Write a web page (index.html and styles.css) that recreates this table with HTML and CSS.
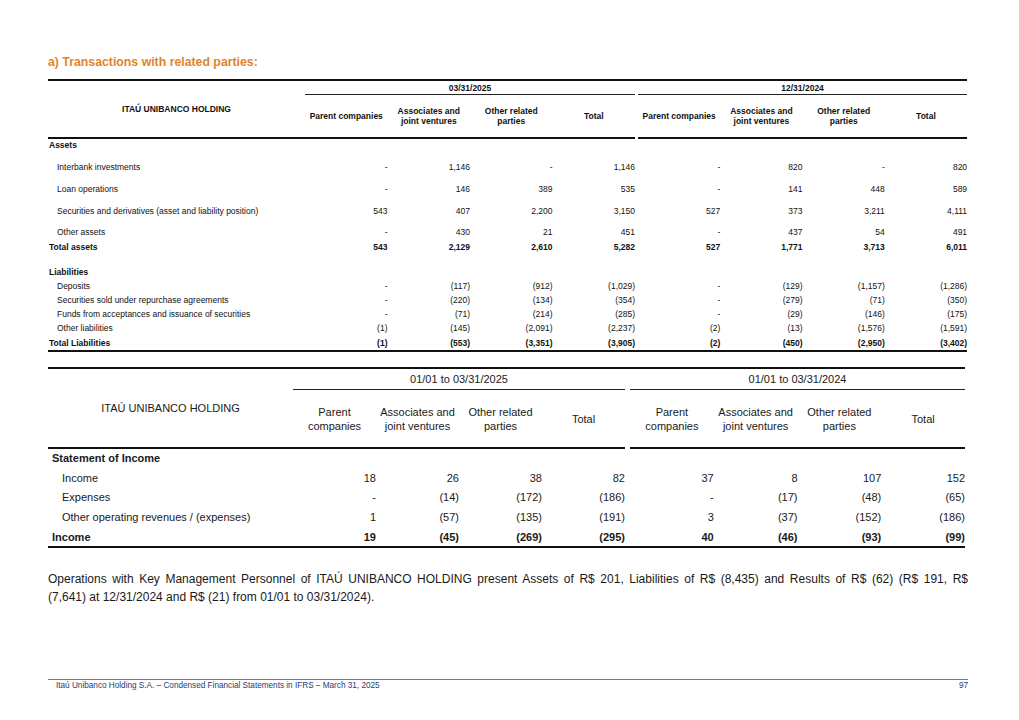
FILE: index.html
```html
<!DOCTYPE html>
<html lang="en">
<head>
<meta charset="utf-8">
<title>Transactions with related parties</title>
<link rel="stylesheet" href="styles.css">
</head>
<body>
<div class="page">
  <h2 class="title">a) Transactions with related parties:</h2>

  <table class="t1">
    <colgroup>
      <col class="c-label">
      <col class="c-g1"><col class="c-g1"><col class="c-g1"><col class="c-g1">
      <col class="c-gap">
      <col class="c-g2"><col class="c-g2"><col class="c-g2"><col class="c-g2">
    </colgroup>
    <thead>
      <tr class="h-date">
        <th rowspan="2" class="lbl-head">ITAÚ UNIBANCO HOLDING</th>
        <th colspan="4" class="date">03/31/2025</th>
        <th rowspan="2" class="gap-head"></th>
        <th colspan="4" class="date">12/31/2024</th>
      </tr>
      <tr class="h-cols">
        <th>Parent companies</th>
        <th>Associates and<br>joint ventures</th>
        <th>Other related<br>parties</th>
        <th>Total</th>
        <th>Parent companies</th>
        <th>Associates and<br>joint ventures</th>
        <th>Other related<br>parties</th>
        <th>Total</th>
      </tr>
    </thead>
    <tbody>
      <tr class="h11 sec"><td>Assets</td><td></td><td></td><td></td><td></td><td></td><td></td><td></td><td></td><td></td></tr>
      <tr class="h22"><td class="ind">Interbank investments</td><td>-</td><td>1,146</td><td>-</td><td>1,146</td><td></td><td>-</td><td>820</td><td>-</td><td>820</td></tr>
      <tr class="h22"><td class="ind">Loan operations</td><td>-</td><td>146</td><td>389</td><td>535</td><td></td><td>-</td><td>141</td><td>448</td><td>589</td></tr>
      <tr class="h22"><td class="ind">Securities and derivatives (asset and liability position)</td><td>543</td><td>407</td><td>2,200</td><td>3,150</td><td></td><td>527</td><td>373</td><td>3,211</td><td>4,111</td></tr>
      <tr class="h21"><td class="ind">Other assets</td><td>-</td><td>430</td><td>21</td><td>451</td><td></td><td>-</td><td>437</td><td>54</td><td>491</td></tr>
      <tr class="h15 sec"><td>Total assets</td><td>543</td><td>2,129</td><td>2,610</td><td>5,282</td><td></td><td>527</td><td>1,771</td><td>3,713</td><td>6,011</td></tr>
      <tr class="h25 sec"><td>Liabilities</td><td></td><td></td><td></td><td></td><td></td><td></td><td></td><td></td><td></td></tr>
      <tr class="h14"><td class="ind">Deposits</td><td>-</td><td>(117)</td><td>(912)</td><td>(1,029)</td><td></td><td>-</td><td>(129)</td><td>(1,157)</td><td>(1,286)</td></tr>
      <tr class="h14"><td class="ind">Securities sold under repurchase agreements</td><td>-</td><td>(220)</td><td>(134)</td><td>(354)</td><td></td><td>-</td><td>(279)</td><td>(71)</td><td>(350)</td></tr>
      <tr class="h14"><td class="ind">Funds from acceptances and issuance of securities</td><td>-</td><td>(71)</td><td>(214)</td><td>(285)</td><td></td><td>-</td><td>(29)</td><td>(146)</td><td>(175)</td></tr>
      <tr class="h14"><td class="ind">Other liabilities</td><td>(1)</td><td>(145)</td><td>(2,091)</td><td>(2,237)</td><td></td><td>(2)</td><td>(13)</td><td>(1,576)</td><td>(1,591)</td></tr>
      <tr class="last sec"><td>Total Liabilities</td><td>(1)</td><td>(553)</td><td>(3,351)</td><td>(3,905)</td><td></td><td>(2)</td><td>(450)</td><td>(2,950)</td><td>(3,402)</td></tr>
    </tbody>
  </table>

  <table class="t2">
    <colgroup>
      <col class="c-label">
      <col class="c-g1"><col class="c-g1"><col class="c-g1"><col class="c-g1">
      <col class="c-gap">
      <col class="c-g2"><col class="c-g2"><col class="c-g2"><col class="c-g2">
    </colgroup>
    <thead>
      <tr class="h-date">
        <th rowspan="2" class="lbl-head">ITAÚ UNIBANCO HOLDING</th>
        <th colspan="4" class="date">01/01 to 03/31/2025</th>
        <th rowspan="2" class="gap-head"></th>
        <th colspan="4" class="date">01/01 to 03/31/2024</th>
      </tr>
      <tr class="h-cols">
        <th>Parent<br>companies</th>
        <th>Associates and<br>joint ventures</th>
        <th>Other related<br>parties</th>
        <th>Total</th>
        <th>Parent<br>companies</th>
        <th>Associates and<br>joint ventures</th>
        <th>Other related<br>parties</th>
        <th>Total</th>
      </tr>
    </thead>
    <tbody>
      <tr class="h16 sec"><td>Statement of Income</td><td></td><td></td><td></td><td></td><td></td><td></td><td></td><td></td><td></td></tr>
      <tr class="h20"><td class="ind">Income</td><td>18</td><td>26</td><td>38</td><td>82</td><td></td><td>37</td><td>8</td><td>107</td><td>152</td></tr>
      <tr class="h19"><td class="ind">Expenses</td><td>-</td><td>(14)</td><td>(172)</td><td>(186)</td><td></td><td>-</td><td>(17)</td><td>(48)</td><td>(65)</td></tr>
      <tr class="h20"><td class="ind">Other operating revenues / (expenses)</td><td>1</td><td>(57)</td><td>(135)</td><td>(191)</td><td></td><td>3</td><td>(37)</td><td>(152)</td><td>(186)</td></tr>
      <tr class="last sec"><td>Income</td><td>19</td><td>(45)</td><td>(269)</td><td>(295)</td><td></td><td>40</td><td>(46)</td><td>(93)</td><td>(99)</td></tr>
    </tbody>
  </table>

  <p class="note"><span class="note-line1">Operations with Key Management Personnel of ITAÚ UNIBANCO HOLDING present Assets of R$ 201, Liabilities of R$ (8,435) and Results of R$ (62) (R$ 191, R$</span><span class="note-line2">(7,641) at 12/31/2024 and R$ (21) from 01/01 to 03/31/2024).</span></p>

  <footer class="footer">
    <span>Itaú Unibanco Holding S.A. – Condensed Financial Statements in IFRS – March 31, 2025</span>
    <span>97</span>
  </footer>
</div>
</body>
</html>
```

FILE: styles.css
```css
html, body {
  margin: 0;
  padding: 0;
  background: #ffffff;
}

body {
  font-family: "Liberation Sans", Arial, sans-serif;
  color: #111111;
}

.page {
  box-sizing: border-box;
  width: 1019px;
  height: 720px;
  padding: 55px 51px 30px 48px;
  display: flex;
  flex-direction: column;
  overflow: hidden;
}

.title {
  margin: 0 0 9px 0;
  font-size: 12.3px;
  line-height: 15px;
  font-weight: bold;
  color: #e3832b;
}

table {
  border-collapse: separate;
  border-spacing: 0;
  table-layout: fixed;
}

th, td {
  padding: 0;
  white-space: nowrap;
}

/* ---------- Table 1 ---------- */
.t1 {
  width: 919px;
  font-size: 8.5px;
  line-height: 10px;
}

.t1 .c-label { width: 257px; }
.t1 .c-g1 { width: 82.5px; }
.t1 .c-gap { width: 3px; }
.t1 .c-g2 { width: 82.25px; }

.t1 th {
  font-weight: bold;
  text-align: center;
  vertical-align: middle;
}

.t1 .h-date { height: 16px; }
.t1 .h-cols { height: 44px; }

.t1 .lbl-head,
.t1 .gap-head,
.t1 .date {
  border-top: 2px solid #111;
}

.t1 .lbl-head { border-bottom: 2px solid #111; }
.t1 .date { border-bottom: 1px solid #222; }
.t1 .h-cols th { border-bottom: 2px solid #111; }

.t1 td {
  text-align: right;
  vertical-align: bottom;
}

.t1 td:first-child {
  text-align: left;
  padding-left: 1px;
}

.t1 td.ind { padding-left: 9px; }

.t1 .sec td { font-weight: bold; }

.t1 .h11 { height: 11px; }
.t1 .h14 { height: 14px; }
.t1 .h15 { height: 15px; }
.t1 .h21 { height: 21px; }
.t1 .h22 { height: 22px; }
.t1 .h25 { height: 25px; }

.t1 .last { height: 19px; }
.t1 .last td {
  padding-bottom: 2px;
  border-bottom: 2px solid #111;
}

/* ---------- Table 2 ---------- */
.t2 {
  margin-top: 15px;
  width: 917px;
  font-size: 11px;
  line-height: 13px;
  color: #1a1a1a;
}

.t2 .c-label { width: 245px; }
.t2 .c-g1 { width: 83px; }
.t2 .c-gap { width: 5px; }
.t2 .c-g2 { width: 83.75px; }

.t2 th {
  font-weight: normal;
  text-align: center;
  vertical-align: middle;
  line-height: 14px;
}

.t2 .h-date { height: 23px; }
.t2 .h-cols { height: 59px; }

.t2 .lbl-head,
.t2 .gap-head,
.t2 .date {
  border-top: 2px solid #111;
}

.t2 .lbl-head { border-bottom: 2px solid #111; }
.t2 .date { border-bottom: 1px solid #222; }
.t2 .h-cols th { border-bottom: 2px solid #111; }

.t2 td {
  text-align: right;
  vertical-align: bottom;
}

.t2 td:first-child {
  text-align: left;
  padding-left: 4px;
}

.t2 td.ind { padding-left: 14px; }

.t2 .sec td { font-weight: bold; }

.t2 .h16 { height: 16px; }
.t2 .h19 { height: 19px; }
.t2 .h20 { height: 20px; }

.t2 .last { height: 24px; }
.t2 .last td {
  padding-bottom: 2px;
  border-bottom: 2px solid #111;
}

/* ---------- Note ---------- */
.note {
  margin: 22px 0 0 0;
  font-size: 12px;
  line-height: 18px;
  color: #1a1a1a;
}

.note-line1 {
  display: block;
  text-align: justify;
  text-align-last: justify;
}

.note-line2 {
  display: block;
}

/* ---------- Footer ---------- */
.footer {
  margin-top: auto;
  border-top: 1px solid #5f7fae;
  padding-top: 1px;
  display: flex;
  justify-content: space-between;
  font-size: 8.2px;
  line-height: 9px;
  color: #1e3b78;
}

.footer span:first-child { padding-left: 8px; }
```
